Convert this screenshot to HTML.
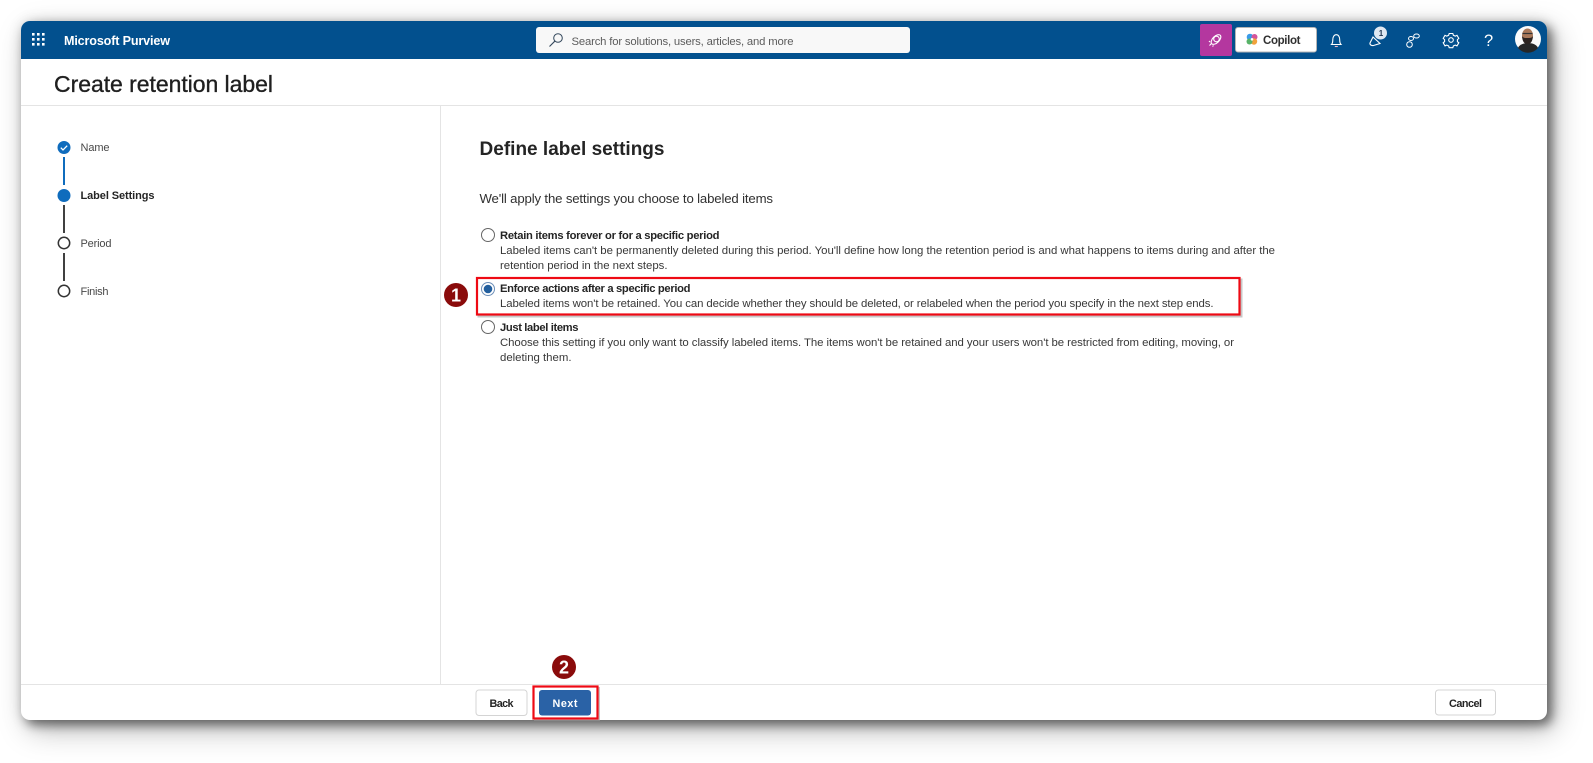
<!DOCTYPE html>
<html lang="en"><head><meta charset="utf-8"><title>Create retention label</title>
<style>
html,body{margin:0;padding:0;width:1593px;height:763px;overflow:hidden;background:#fff}
#win{position:absolute;left:21px;top:21px;width:1526px;height:699px;border-radius:9px;background:#fff;box-shadow:5px 5px 11px rgba(0,0,0,.5),7px 10px 30px rgba(0,0,0,.28),0 0 14px rgba(0,0,0,.1)}
svg{position:absolute;left:0;top:0;filter:blur(.25px)}
text{font-family:"Liberation Sans",sans-serif;fill:#242424;white-space:pre}
.b{font-weight:700}
.d{font-size:11.4px;fill:#383838}
.t{font-size:11.2px;font-weight:700}
.s{font-size:11px;fill:#484848}
.btn{font-size:10.8px;font-weight:700}
</style></head><body>
<div id="win"></div>
<svg width="1593" height="763" viewBox="0 0 1593 763" xmlns="http://www.w3.org/2000/svg">
<!-- header -->
<path d="M21 59V30a9 9 0 0 1 9-9H1538a9 9 0 0 1 9 9V59Z" fill="#02508e"/>
<g fill="#fff">
<rect x="32" y="33" width="2.600" height="2.600"/><rect x="37" y="33" width="2.600" height="2.600"/><rect x="42" y="33" width="2.600" height="2.600"/>
<rect x="32" y="38" width="2.600" height="2.600"/><rect x="37" y="38" width="2.600" height="2.600"/><rect x="42" y="38" width="2.600" height="2.600"/>
<rect x="32" y="43" width="2.600" height="2.600"/><rect x="37" y="43" width="2.600" height="2.600"/><rect x="42" y="43" width="2.600" height="2.600"/>
</g>
<text x="64" y="45" class="b" style="font-size:12.600px;fill:#fff" textLength="106" lengthAdjust="spacing">Microsoft Purview</text>
<!-- search -->
<rect x="536" y="27" width="374" height="26" rx="3" fill="#f8f8f8"/>
<circle cx="558" cy="38" r="4.300" fill="none" stroke="#33475b" stroke-width="1"/>
<path d="M554.800 41.200 549.500 46.500" stroke="#33475b" stroke-width="1.100" fill="none"/>
<text x="571.500" y="45" style="font-size:11.300px;fill:#5c5c5c" textLength="222" lengthAdjust="spacing">Search for solutions, users, articles, and more</text>
<!-- purple -->
<rect x="1200" y="24" width="32" height="32" rx="2" fill="#b4379f"/>
<g fill="none" stroke="#fff" stroke-width="1.100">
<circle cx="1216.500" cy="39" r="2.800"/><ellipse cx="1216" cy="39.500" rx="6" ry="3.300" transform="rotate(-45 1216 39.500)"/>
<path d="M1211.500 43.500l-2 2M1210 41l-1 1M1213.500 45.500l-1 1"/>
</g>
<!-- copilot -->
<rect x="1235.500" y="27.500" width="81" height="24.500" rx="2.500" fill="#fff" stroke="#b5b5b5"/>
<circle cx="1250" cy="37" r="3.300" fill="#3a9be8"/><circle cx="1254.500" cy="37" r="3" fill="#d3549b"/><circle cx="1254" cy="41.500" r="3.200" fill="#f1a23c"/><circle cx="1249.500" cy="41.500" r="3" fill="#58b368"/><circle cx="1252" cy="39.300" r="1.300" fill="#fff"/>
<text x="1263" y="44" class="b" style="font-size:11.500px;fill:#303030" textLength="37.500" lengthAdjust="spacing">Copilot</text>
<!-- bell -->
<path d="M1331.500 44.500h9.500c-1.200-1.300-1.300-2.600-1.300-4.800 0-3-1.400-5-3.400-5s-3.500 2-3.500 5c0 2.200-.1 3.500-1.300 4.800Z" fill="none" stroke="#fff" stroke-width="1.100"/>
<path d="M1334.800 46.500h3" stroke="#f0b9c8" stroke-width="1.100"/>
<!-- flag/notification -->
<path d="M1373 37l7 6.500-6.500 2c-2 .5-4-1-3.500-2.500Z" fill="none" stroke="#fff" stroke-width="1.100"/>
<circle cx="1380.500" cy="33" r="6.500" fill="#dfe8f2"/>
<text x="1378.800" y="36" class="b" style="font-size:8px;fill:#1f3550">1</text>
<!-- connections -->
<g fill="none" stroke="#fff" stroke-width="1">
<circle cx="1409.500" cy="44.500" r="2.800"/><ellipse cx="1411" cy="38.500" rx="2.500" ry="2"/><ellipse cx="1416.500" cy="36" rx="2.800" ry="2"/>
</g>
<!-- gear -->
<g fill="none" stroke="#fff" stroke-width="1.100">
<circle cx="1451" cy="40" r="2.300"/>
<path d="M1449.200 33.500h3.600l.6 1.800 1.900.8 1.700-.8 1.800 3.100-1.400 1.200v2l1.400 1.200-1.800 3.100-1.700-.8-1.900.8-.6 1.800h-3.600l-.6-1.800-1.900-.8-1.700.8-1.800-3.100 1.400-1.200v-2l-1.400-1.200 1.800-3.100 1.700.8 1.900-.8Z"/>
</g>
<!-- help -->
<text x="1484" y="46" style="font-size:16.500px;fill:#fff">?</text>
<!-- avatar -->
<circle cx="1528" cy="39" r="13" fill="#fbfbfb"/>
<path d="M1518 48c1-3 5-5 10-5s9 2 10 5a13 13 0 0 1-20 0Z" fill="#262626"/>
<ellipse cx="1527.500" cy="35.500" rx="5.500" ry="7" fill="#a9785a"/>
<path d="M1522 36c.5 6 2.500 8 5.500 8s5-2 5.500-8c-1 2-3 2-5.500 2s-4.500 0-5.500-2Z" fill="#2c2320"/>
<path d="M1522.500 33.500h10" stroke="#333" stroke-width="1.200"/>
<!-- title -->
<text x="54" y="92" style="font-size:23px;fill:#1f1f1f;stroke:#1f1f1f;stroke-width:.35px" textLength="219" lengthAdjust="spacing">Create retention label</text>
<rect x="21" y="105" width="1526" height="1" fill="#e4e4e4"/>
<rect x="440" y="106" width="1" height="578" fill="#e4e4e4"/>
<rect x="21" y="684" width="1526" height="1" fill="#e4e4e4"/>
<!-- steps -->
<rect x="63" y="157" width="2" height="28" fill="#0f6cbd"/>
<rect x="63" y="205" width="2" height="28" fill="#404040"/>
<rect x="63" y="253" width="2" height="28" fill="#404040"/>
<circle cx="64" cy="147.500" r="6.500" fill="#0f6cbd"/>
<path d="M60.800 147.700l2.200 2.200 4.200-4.200" fill="none" stroke="#fff" stroke-width="1.300"/>
<circle cx="64" cy="195.500" r="6.500" fill="#0f6cbd"/>
<circle cx="64" cy="243" r="5.700" fill="#fff" stroke="#333" stroke-width="1.500"/>
<circle cx="64" cy="291" r="5.700" fill="#fff" stroke="#333" stroke-width="1.500"/>
<text x="80.500" y="151" class="s" textLength="29" lengthAdjust="spacing">Name</text>
<text x="80.500" y="199" class="s b" style="fill:#242424" textLength="74" lengthAdjust="spacing">Label Settings</text>
<text x="80.500" y="247" class="s" textLength="31" lengthAdjust="spacing">Period</text>
<text x="80.500" y="295" class="s" textLength="28" lengthAdjust="spacing">Finish</text>
<!-- main -->
<text x="479.500" y="155" class="b" style="font-size:19px;fill:#242424" textLength="185" lengthAdjust="spacing">Define label settings</text>
<text x="479.500" y="203" style="font-size:13.200px;fill:#303030" textLength="293.500" lengthAdjust="spacing">We'll apply the settings you choose to labeled items</text>
<circle cx="488" cy="235" r="6.500" fill="#fff" stroke="#666" stroke-width="1"/>
<text x="500" y="239" class="t" textLength="219.500" lengthAdjust="spacing">Retain items forever or for a specific period</text>
<text x="500" y="254" class="d" textLength="775" lengthAdjust="spacing">Labeled items can't be permanently deleted during this period. You'll define how long the retention period is and what happens to items during and after the</text>
<text x="500" y="269" class="d" textLength="167.500" lengthAdjust="spacing">retention period in the next steps.</text>
<!-- red box 1 -->
<rect x="478.500" y="279.500" width="763" height="37" fill="none" stroke="#999" stroke-width="2" opacity=".55"/>
<rect x="477" y="278" width="762.500" height="36.500" fill="#fff" stroke="#ee0a14" stroke-width="2.200"/>
<circle cx="488" cy="289" r="6.500" fill="#fff" stroke="#6d8fb8" stroke-width="1"/>
<circle cx="488" cy="289" r="4.300" fill="#225f9e"/>
<text x="500" y="292" class="t" textLength="190.500" lengthAdjust="spacing">Enforce actions after a specific period</text>
<text x="500" y="307" class="d" textLength="713.500" lengthAdjust="spacing">Labeled items won't be retained. You can decide whether they should be deleted, or relabeled when the period you specify in the next step ends.</text>
<circle cx="488" cy="327" r="6.500" fill="#fff" stroke="#666" stroke-width="1"/>
<text x="500" y="331" class="t" textLength="78.500" lengthAdjust="spacing">Just label items</text>
<text x="500" y="346" class="d" textLength="734" lengthAdjust="spacing">Choose this setting if you only want to classify labeled items. The items won't be retained and your users won't be restricted from editing, moving, or</text>
<text x="500" y="361" class="d" textLength="71.500" lengthAdjust="spacing">deleting them.</text>
<!-- badge 1 -->
<circle cx="456" cy="295" r="12" fill="#8a0b0b"/>
<text x="456" y="301.500" text-anchor="middle" class="b" style="font-size:18px;fill:#fff">1</text>
<!-- badge 2 -->
<circle cx="564" cy="667" r="12" fill="#8a0b0b"/>
<text x="564" y="673.500" text-anchor="middle" class="b" style="font-size:18px;fill:#fff">2</text>
<!-- footer buttons -->
<rect x="476" y="690" width="51" height="25.500" rx="3" fill="#fff" stroke="#d4d4d4"/>
<text x="501.500" y="707" text-anchor="middle" class="btn" textLength="24" lengthAdjust="spacing">Back</text>
<rect x="535" y="688" width="64" height="32" fill="none" stroke="#999" stroke-width="2" opacity=".55"/>
<rect x="533.500" y="686.500" width="64" height="32" fill="#fff" stroke="#ee0a14" stroke-width="2.200"/>
<rect x="539" y="690" width="52" height="25.500" rx="3" fill="#2a62a6"/>
<text x="565" y="707" text-anchor="middle" class="btn" style="fill:#fff" textLength="25" lengthAdjust="spacing">Next</text>
<rect x="1435.500" y="690" width="60" height="25" rx="3" fill="#fff" stroke="#d4d4d4"/>
<text x="1465.500" y="707" text-anchor="middle" class="btn" textLength="33" lengthAdjust="spacing">Cancel</text>
</svg>
</body></html>
